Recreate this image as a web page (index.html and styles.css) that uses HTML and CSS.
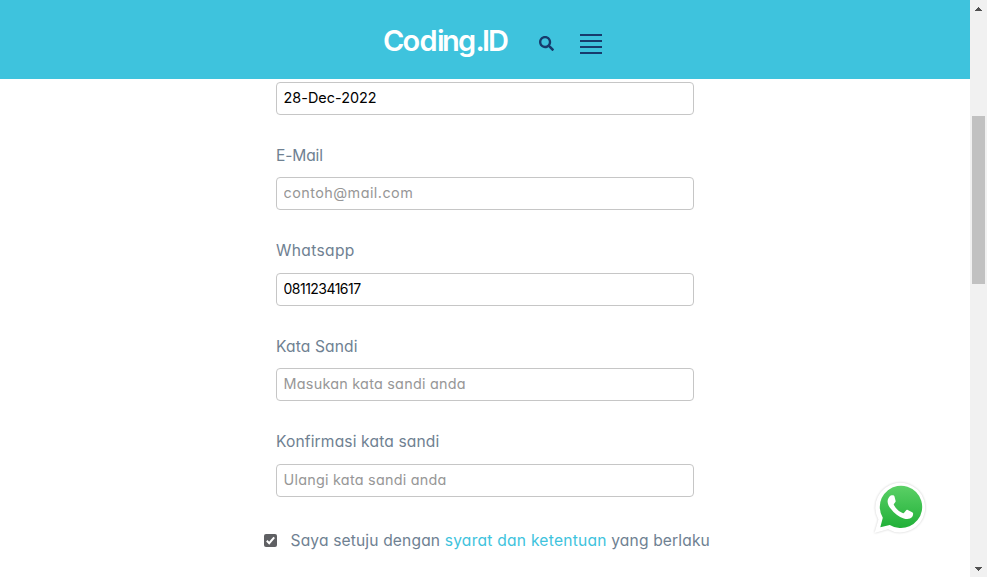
FILE: index.html
```html
<!DOCTYPE html>
<html lang="id">
<head>
<meta charset="utf-8">
<title>Coding.ID</title>
<link rel="stylesheet" href="styles.css">
</head>
<body>
<div class="page">
  <header class="navbar">
    <svg class="logo" width="126" height="34" viewBox="0 0 126 34"><text x="0 19.500 36.500 54 59 75 92.500 99 105" y="26">Coding.ID</text></svg>
    <svg class="search" width="15" height="15" viewBox="0 0 512 512"><path d="M505 442.700 405.300 343c-4.500-4.500-10.600-7-17-7H372c27.600-35.300 44-79.700 44-128C416 93.100 322.900 0 208 0S0 93.100 0 208s93.100 208 208 208c48.300 0 92.700-16.400 128-44v16.300c0 6.400 2.500 12.500 7 17l99.700 99.700c9.400 9.400 24.600 9.400 33.900 0l28.300-28.300c9.400-9.400 9.400-24.600.1-34zM208 336c-70.700 0-128-57.200-128-128 0-70.700 57.200-128 128-128 70.700 0 128 57.200 128 128 0 70.700-57.200 128-128 128z"/></svg>
    <div class="burger"><i></i><i></i><i></i><i></i></div>
  </header>
  <form class="form">
    <div class="field"><input class="date" type="text" value="28-Dec-2022"></div>
    <div class="field"><label class="l-mail">E-Mail</label><input class="mail" type="text" placeholder="contoh@mail.com"></div>
    <div class="field"><label class="l-wa">Whatsapp</label><input class="phone" type="text" value="08112341617"></div>
    <div class="field"><label class="l-pass">Kata Sandi</label><input class="pass" type="text" placeholder="Masukan kata sandi anda"></div>
    <div class="field"><label class="l-conf">Konfirmasi kata sandi</label><input class="conf" type="text" placeholder="Ulangi kata sandi anda"></div>
    <div class="agree">
      <svg class="check" width="13" height="13" viewBox="0 0 13 13"><rect width="13" height="13" rx="2"/><path d="M2.800 6.800 5.200 9.200 10.200 3.400"/></svg>
      <span>Saya setuju dengan <a>syarat dan ketentuan</a> yang berlaku</span>
    </div>
  </form>
</div>
<div class="scrollbar">
  <svg width="7" height="4" viewBox="0 0 7 4"><path d="M3 0h1v1h1v1h1v1h1v1H0V3h1V2h1V1h1z"/></svg>
  <div class="thumb"></div>
  <svg width="7" height="4" viewBox="0 0 7 4"><path d="M0 0h7v1H6v1H5v1H4v1H3V3H2V2H1V1H0z"/></svg>
</div>
<svg class="whatsapp" width="60" height="60" viewBox="0 0 60 60">
  <defs><linearGradient id="green" x1="0" y1="0" x2="0" y2="1"><stop offset="0" stop-color="#5bd066"/><stop offset="1" stop-color="#20b038"/></linearGradient></defs>
  <path class="halo" d="M4.500 56 8.400 42.600A24.900 24.900 0 1 1 18 52.300Z"/>
  <path fill="url(#green)" d="M10.300 50.300 12.800 40.800A21.200 21.200 0 1 1 19.800 47.900Z"/>
  <path class="handset" d="M24.500 19.500c-.5-1.200-1-1.300-1.700-1.300-1.300-.1-2.200.1-3 1.100-1.400 1.500-2.200 3.200-2.200 5.100 0 2.500 1.300 5 3 7.200 3.700 5.100 8.200 8.400 13.200 9.900 3.200 1 6.500.7 8.300-1.400 1-1.200 1.200-3 .9-4-.2-.6-.6-.8-1.300-1.200l-3.900-1.900c-.8-.3-1.300-.3-1.800.4l-1.900 2.400c-.4.5-.8.5-1.500.2-3.800-1.600-6.700-4.300-8.700-7.900-.3-.6-.2-.9.200-1.400l1.300-1.700c.4-.6.3-1 .1-1.500Z"/>
</svg>
</body>
</html>
```
FILE: styles.css
```css
* { box-sizing: border-box; }
body {
  margin: 0;
  height: 577px;
  display: flex;
  overflow: hidden;
  background: #fff;
  color: #6f8192;
  font: 375 15.6px/24px Inter, sans-serif;
  font-feature-settings: "cv11", "ss03";
}
.page { flex: 1; }
.navbar {
  height: 79px;
  padding: 6px 0 0 383px;
  display: flex;
  align-items: center;
  background: #3ec3dd;
}
.logo { overflow: visible; margin-top: -1px; }
.logo text { fill: #fff; font: 600 29px Inter, sans-serif; font-feature-settings: "cv11"; }
.search { margin: 1px 0 0 30px; fill: #173b6c; }
.burger { margin: 2px 0 0 26px; width: 22px; display: grid; gap: 4px; }
.burger i { height: 2px; background: #173b6c; }
.form { width: 418px; margin-left: 276px; padding-top: 2.9px; }
.field { display: flex; flex-direction: column; margin-bottom: 29px; }
label { height: 24px; margin-bottom: 9.5px; }
input {
  height: 33px;
  width: 100%;
  padding: 0 7px 2px 6.5px;
  border: 1px solid #c6c6c6;
  border-radius: 4px;
  background: #fff;
  color: #000;
  font: 375 14.4px Inter, sans-serif;
  font-feature-settings: inherit;
  outline: 0;
}
input::placeholder { color: #979797; opacity: 1; }
.l-mail { letter-spacing: -.15px; }
.l-wa { letter-spacing: .35px; }
.l-pass { letter-spacing: .13px; }
.l-conf { letter-spacing: .13px; }
.date { letter-spacing: .03px; }
.mail { letter-spacing: .45px; }
.phone { font-size: 14px; letter-spacing: -.52px; }
.pass, .conf { letter-spacing: .24px; }
.agree { display: flex; align-items: center; margin: 32px -30px 0 -12px; white-space: nowrap; }
.agree span { margin-left: 13.5px; letter-spacing: .14px; }
.agree a { color: #3ec3dd; letter-spacing: .24px; }
.check { fill: #5f6063; }
.check path { fill: none; stroke: #fff; stroke-width: 2; }
.scrollbar {
  width: 17px;
  padding: 7px 2px 6px;
  display: flex;
  flex-direction: column;
  align-items: center;
  background: #f1f1f1;
}
.scrollbar svg { fill: #505050; }
.thumb { width: 13px; height: 168px; margin: 105px 0 auto; background: #c1c1c1; }
.whatsapp { position: absolute; left: 869.5px; top: 476.5px; }
.halo { fill: #fff; filter: drop-shadow(0 0 1px rgba(0,0,0,.2)); }
.handset { fill: #fff; }
```
